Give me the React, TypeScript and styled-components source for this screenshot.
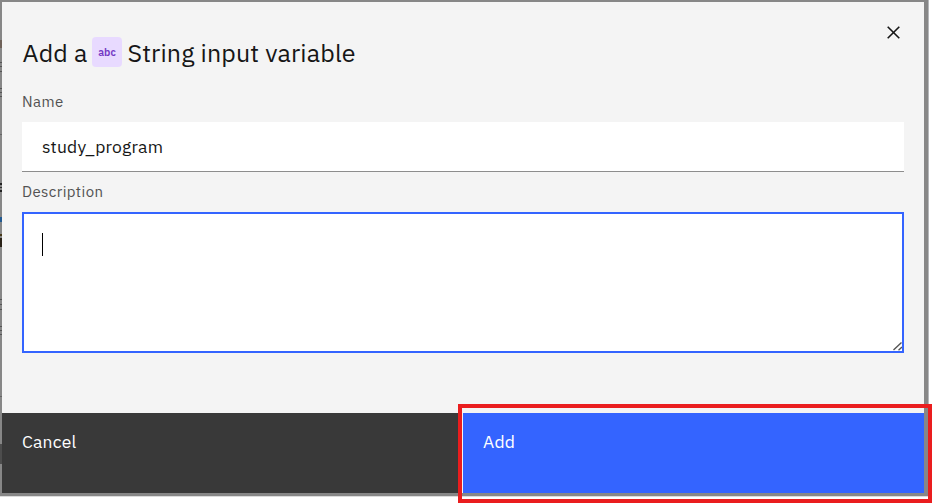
import React from 'react';
import styled, { createGlobalStyle } from 'styled-components';

const GlobalStyle = createGlobalStyle`
  * { box-sizing: border-box; }
  html, body { margin: 0; height: 100%; overflow: hidden; background: #fff; }
  body { font-family: 'IBM Plex Sans', 'Open Sans', sans-serif; color: #161616; }
`;

const Page = styled.div`
  position: relative;
  width: 932px;
  height: 503px;
  overflow: hidden;
`;

const Backdrop = styled.div`
  position: relative;
  width: 929px;
  height: 497px;
  padding: 2px 0 0 2px;
  background: #878787;
  border-right: 1px solid #b5b7ba;
  border-bottom: 1px solid #dcdcdc;
`;

const Behind = styled.svg`
  position: absolute;
  left: 0;
  top: 0;
`;

const Dialog = styled.section`
  width: 922px;
  height: 491px;
  display: flex;
  flex-direction: column;
  background: #f4f4f4;
`;

const Body = styled.div`
  flex: 1;
  padding: 0 20px;
  display: flex;
  flex-direction: column;
`;

const Header = styled.header`
  height: 90px;
  display: flex;
  justify-content: space-between;
`;

const Title = styled.h1`
  margin: 35px 0 0;
  height: 30px;
  display: flex;
  align-items: center;
  font-size: 25px;
  font-weight: 400;
  line-height: 30px;
  white-space: nowrap;
`;

const TitleText = styled.span<{ $width: number }>`
  width: ${p => p.$width}px;
  letter-spacing: 0.15px;
  padding: 1px 0 0 0.5px;
`;

const TypeBadge = styled.span`
  width: 30px;
  height: 30px;
  margin-right: 5px;
  border-radius: 4px;
  background: #e8daff;
  color: #7339c4;
  display: grid;
  place-items: center;
  font: 600 10.5px/30px 'IBM Plex Sans', 'Open Sans', sans-serif;
`;

const CloseButton = styled.button`
  width: 21px;
  height: 21px;
  margin: 20px 0 0 0;
  padding: 0;
  border: 0;
  background: none;
  display: grid;
  place-items: center;
`;

const Label = styled.label`
  height: 20px;
  font-size: 15px;
  line-height: 20px;
  letter-spacing: 0.4px;
  color: #525252;
`;

const NameInput = styled.input`
  width: 882px;
  height: 50px;
  margin: 10px 0 10px;
  padding: 0 20px;
  border: 0;
  border-bottom: 1px solid #8d8d8d;
  border-radius: 0;
  outline: 0;
  background: #fff;
  color: #161616;
  font: 400 17.5px/24px 'IBM Plex Sans', 'Open Sans', sans-serif;
  letter-spacing: 0.2px;
`;

const DescriptionBox = styled.div`
  position: relative;
  width: 882px;
  height: 141px;
  margin-top: 10px;
  padding: 19px 18px;
  border: 2px solid #3464ff;
  background: #fff;
`;

const Caret = styled.div`
  width: 1px;
  height: 23px;
  background: #000;
`;

const Grip = styled.svg`
  position: absolute;
  right: 0;
  bottom: 0;
`;

const Footer = styled.footer`
  height: 80px;
  display: grid;
  grid-template-columns: 460px 461px;
  column-gap: 1px;
`;

const Action = styled.button<{ $primary?: boolean }>`
  display: flex;
  align-items: flex-start;
  padding: 17px 20px;
  border: 0;
  background: ${p => (p.$primary ? '#3464ff' : '#393939')};
  color: #fff;
  font: 400 17.5px/24px 'IBM Plex Sans', 'Open Sans', sans-serif;
  letter-spacing: 0.2px;
`;

const Highlight = styled.div`
  position: absolute;
  left: 458px;
  top: 404px;
  width: 474px;
  height: 99px;
  border: 4px solid #ea1d1e;
  pointer-events: none;
`;

const behindMarks: [number, number, string][] = [
  [40, 8, '#6f6259'], [62, 1, '#555'], [66, 1, '#555'], [71, 1, '#555'],
  [88, 1, '#555'], [92, 1, '#555'], [96, 1, '#555'], [134, 1, '#666'],
  [183, 2, '#222'], [187, 1, '#333'], [190, 2, '#222'], [217, 5, '#225a91'],
  [234, 2, '#463818'], [238, 9, '#2a2218'], [299, 1, '#555'], [304, 1, '#555'],
  [309, 1, '#555'], [326, 1, '#555'], [330, 1, '#555'], [334, 1, '#555'],
  [396, 1, '#666'], [444, 20, '#4d4d4d'],
];

export default function App() {
  return (
    <Page>
      <GlobalStyle />
      <Backdrop>
        <Behind width="2" height="496">
          {behindMarks.map(([y, h, fill]) => (
            <rect key={y} x="0" y={y} width="2" height={h} fill={fill} />
          ))}
        </Behind>
        <Dialog role="dialog">
          <Body>
            <Header>
              <Title>
                <TitleText $width={70}>Add a</TitleText>
                <TypeBadge>abc</TypeBadge>
                <TitleText $width={240}>String input variable</TitleText>
              </Title>
              <CloseButton aria-label="Close">
                <svg width="13" height="13" viewBox="0 0 13 13" fill="none" stroke="#161616" strokeWidth="1.6">
                  <path d="M.7.7l11.6 11.6M12.3.7L.7 12.3" />
                </svg>
              </CloseButton>
            </Header>
            <Label>Name</Label>
            <NameInput defaultValue="study_program" spellCheck={false} />
            <Label>Description</Label>
            <DescriptionBox>
              <Caret />
              <Grip width="9" height="10" viewBox="0 0 9 10" fill="none" stroke="#555" strokeWidth="1.4">
                <path d="M.5 9L8.5 1.5M5.5 9.2L9 6" />
              </Grip>
            </DescriptionBox>
          </Body>
          <Footer>
            <Action>Cancel</Action>
            <Action $primary>Add</Action>
          </Footer>
        </Dialog>
      </Backdrop>
      <Highlight />
    </Page>
  );
}
